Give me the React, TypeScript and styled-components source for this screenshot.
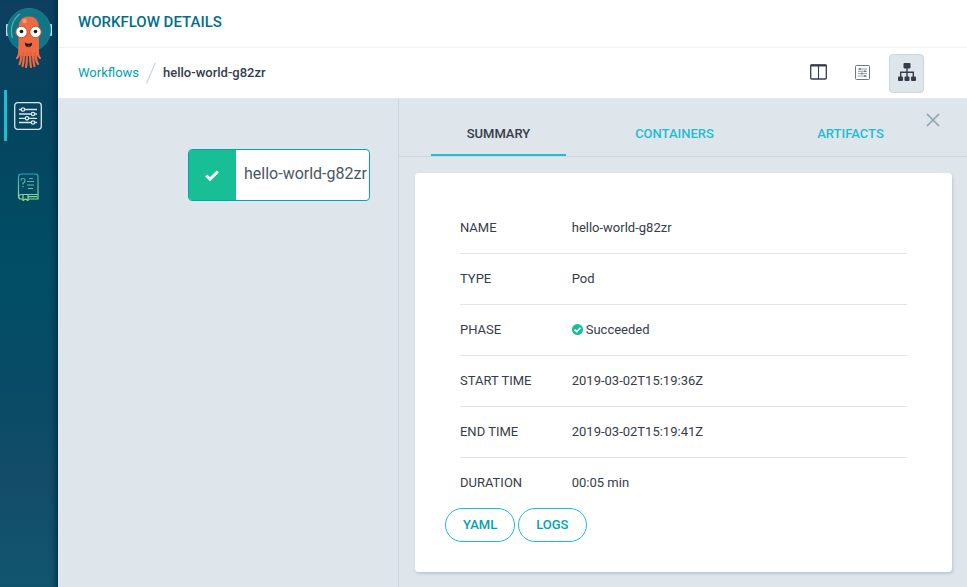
import React from "react";
import styled, { createGlobalStyle, css } from "styled-components";

const GlobalStyle = createGlobalStyle`
  * { box-sizing: border-box; }
  body {
    margin: 0;
    font-family: Roboto, "Liberation Sans", sans-serif;
    font-size: 13px;
    line-height: 20px;
    color: #363c4a;
    background: #dee6eb;
  }
  button { font: inherit; cursor: pointer; }
  svg { display: block; }
`;

const Layout = styled.div`
  display: flex;
  min-height: 100vh;
`;

const Sidebar = styled.nav`
  flex: none;
  width: 58px;
  display: flex;
  flex-direction: column;
  align-items: stretch;
  padding-top: 7px;
  background: linear-gradient(to bottom, #0d3f60 0%, #04465f 25%, #004e66 45%, #0a4b66 68%, #134c69 82%, #11566f 100%);
  box-shadow: inset -6px 0 6px -4px #032c40;
`;

const Logo = styled.a`
  display: flex;
  justify-content: center;
  height: 62px;
  margin-bottom: 21px;
`;

const NavLink = styled.a<{ $active?: boolean }>`
  display: flex;
  align-items: center;
  justify-content: center;
  height: 51px;
  margin: 0 4px 20px;
  padding-right: 5px;
  border-left: 3px solid ${(p) => (p.$active ? "#1fbdd0" : "transparent")};
`;

const Main = styled.main`
  flex: 1;
  min-width: 0;
  display: flex;
  flex-direction: column;
`;

const TitleBar = styled.header`
  height: 48px;
  padding: 0 20px 4px;
  display: flex;
  align-items: center;
  background: #fff;
  border-bottom: 1px solid #eff1f3;
`;

const Title = styled.h1`
  margin: 0;
  font-size: 15px;
  font-weight: 500;
  color: #006f8a;
`;

const ToolBar = styled.div`
  height: 51px;
  padding: 0 43px 0 20px;
  display: flex;
  align-items: center;
  justify-content: space-between;
  background: #fff;
  border-bottom: 1px solid #e3e8ec;
`;

const Breadcrumbs = styled.div`
  display: flex;
  align-items: center;
  gap: 7px;
  a { color: #00a2b3; text-decoration: none; }
  strong { font-weight: 500; }
`;

const Tools = styled.div`
  display: flex;
  gap: 9px;
`;

const ToolButton = styled.button<{ $active?: boolean }>`
  display: flex;
  align-items: center;
  justify-content: center;
  width: 35px;
  height: 39px;
  padding: 0 0 2px;
  border: 1px solid ${(p) => (p.$active ? "#ccd6dd" : "transparent")};
  border-radius: 4px;
  background: ${(p) => (p.$active ? "#dee6eb" : "transparent")};
`;

const Body = styled.div`
  flex: 1;
  display: flex;
`;

const Graph = styled.section`
  flex: 1;
  min-width: 0;
  padding: 50px 28px 0 130px;
`;

const Node = styled.div`
  display: flex;
  height: 52px;
  border: 1px solid #00a2b3;
  border-radius: 4px;
  background: #fff;
  overflow: hidden;
  white-space: nowrap;
`;

const NodeStatus = styled.div`
  flex: none;
  width: 47px;
  display: flex;
  align-items: center;
  justify-content: center;
  background: #18be94;
`;

const NodeName = styled.div`
  padding-left: 8px;
  font-size: 16px;
  line-height: 48px;
  color: #495763;
`;

const Panel = styled.aside`
  flex: none;
  width: 62.6%;
  border-left: 1px solid #ccd6dd;
`;

const TabBar = styled.div`
  position: relative;
  display: flex;
  gap: 41px;
  height: 58px;
  padding: 0 49px 0 32px;
  border-bottom: 1px solid #ccd6dd;
`;

const Tab = styled.button<{ $active?: boolean }>`
  flex: 1 1 0;
  min-width: 0;
  padding: 14px 0 0;
  border: 0;
  border-bottom: 2px solid transparent;
  background: none;
  font-weight: 500;
  color: #1fbdd0;
  ${(p) => p.$active && css`
    color: #363c4a;
    border-bottom-color: #1fbdd0;
  `}
`;

const CloseButton = styled.button`
  position: absolute;
  top: 14px;
  right: 27px;
  padding: 0;
  border: 0;
  background: none;
`;

const Card = styled.div`
  margin: 16px 15px 15px 16px;
  padding: 30px;
  border-radius: 4px;
  background: #fff;
  box-shadow: 1px 2px 3px rgba(90, 110, 125, 0.25);
`;

const Details = styled.dl`
  margin: 0 15px;
`;

const Row = styled.div`
  display: grid;
  grid-template-columns: 1fr 3fr;
  align-items: center;
  height: 51px;
  border-bottom: 1px solid #dee6eb;
  &:last-child { height: 50px; border-bottom: 0; }
  dd { margin: 0; display: flex; align-items: center; gap: 3px; }
`;

const Actions = styled.div`
  display: flex;
  gap: 3px;
`;

const PillButton = styled.button`
  height: 34px;
  padding: 0 17px;
  border: 1px solid #1fbdd0;
  border-radius: 17px;
  background: #fff;
  font-weight: 500;
  color: #00a2b3;
`;

const OctopusLogo = () => (
  <svg width="46" height="62" viewBox="0 0 46 62">
    <rect x="0" y="17" width="2.500" height="12" rx="1" fill="#c5e2ef" />
    <rect x="43.500" y="17" width="2.500" height="12" rx="1" fill="#c5e2ef" />
    <circle cx="23" cy="23" r="21.500" fill="#127586" stroke="#1b7f95" strokeWidth="1" />
    <path d="M6.500 31C3.500 21 7 12 14 7" fill="none" stroke="#55afb9" strokeWidth="1.200" />
    <g fill="none" stroke="#ee6b42" strokeWidth="2.200" strokeLinecap="round">
      <path d="M13.500 40c0 6 0 9-2.500 11M15.500 42c0 8 0 12-2 15M18 43c0 8 0 12-1.500 16M21 43c0 8 0 13-1 17" />
      <path d="M31.500 40c0 6 0 9 2.500 11M29.500 42c0 8 0 12 2.500 15M27 43c0 8 0 12 1.500 16M24 43c0 8 0 13 1 17" />
    </g>
    <path d="M12.500 22C12.500 14 16 9.500 22.800 9.500S33 14 33 22v22c0 3-2 5-4 5H17c-2 0-4.500-2-4.500-5z" fill="#ee6b42" />
    <path d="M17 45v6m4-6v8m4-8v8m4-8v6" stroke="#d2502f" strokeWidth="0.700" fill="none" />
    <circle cx="18.500" cy="14" r="2.200" fill="#f79a75" />
    <circle cx="15.500" cy="25" r="5.700" fill="#fff" stroke="#cf4c30" strokeWidth="1" />
    <circle cx="29.500" cy="25" r="5.700" fill="#fff" stroke="#cf4c30" strokeWidth="1" />
    <circle cx="15.500" cy="24.500" r="1.800" fill="#101820" />
    <circle cx="29.500" cy="24.500" r="1.800" fill="#101820" />
    <path d="M18.800 35.500q3.700 2.500 7.400 0-.3 4.800-3.700 4.800t-3.700-4.800z" fill="#17181c" />
    <path d="M21 39q1.500-1.200 3 0-1.500 1.600-3 0z" fill="#e43b32" />
  </svg>
);

const SlidersIcon = () => (
  <svg width="28" height="28" viewBox="0 0 28 28" fill="none" stroke="#d8e6ee" strokeWidth="1.300">
    <rect x="0.700" y="0.700" width="26.600" height="26.600" rx="3" />
    <path d="M5 7.500h2m4 0h12M5 12h12m4 0h2M5 16.300h6m4 0h8M5 20.500h12m4 0h2" />
    <circle cx="9" cy="7.500" r="1.700" />
    <circle cx="19" cy="12" r="1.700" />
    <circle cx="13" cy="16.300" r="1.700" />
    <circle cx="19" cy="20.500" r="1.700" />
  </svg>
);

const BookIcon = () => (
  <svg width="22" height="28" viewBox="0 0 22 28" fill="none" strokeWidth="1.200">
    <defs>
      <linearGradient id="book" gradientUnits="userSpaceOnUse" x1="0" y1="0" x2="0" y2="28">
        <stop offset="0" stopColor="#26a6bd" />
        <stop offset="1" stopColor="#9be28c" />
      </linearGradient>
    </defs>
    <g stroke="url(#book)">
      <path d="M4 26a2.500 2.500 0 0 1-2.500-3V3.500A2.500 2.500 0 0 1 4 1h14.500A2.500 2.500 0 0 1 21 3.500V21.500H4a2.200 2.200 0 0 0 0 4.500h2M11 26h10V21.500M11 23.700h9" />
      <path d="M6 21.500V27.500l2.500-1.500 2.500 1.500V21.500" />
      <path d="M4 7.500q0-2 2-2t2 2-2 2.500v1.500M6 13v1.300M12 5.500h4M10 8.500h7M10 12h7M11 15.500h5" />
    </g>
  </svg>
);

const Slash = () => (
  <svg width="10" height="22" viewBox="0 0 10 22" stroke="#ccd6dd" strokeWidth="1.200">
    <path d="M0.500 21.500L9.500 0.500" />
  </svg>
);

const ColumnsIcon = () => (
  <svg width="17" height="16" viewBox="0 0 17 16" fill="none" stroke="#363c4a">
    <rect x="0.700" y="1" width="15.600" height="14" rx="1" strokeWidth="1.300" />
    <path d="M0.500 1.500h16" strokeWidth="2" />
    <path d="M8.500 2v13" strokeWidth="1.100" />
  </svg>
);

const SmallSlidersIcon = () => (
  <svg width="15" height="15" viewBox="0 0 15 15" fill="none" stroke="#6c7684">
    <rect x="0.500" y="0.500" width="14" height="14" rx="1" />
    <path d="M3 4h9M3 6.300h9M3 8.600h9M3 11h9" strokeWidth="0.700" />
    <g fill="#6c7684" stroke="none">
      <circle cx="5" cy="4" r="1" />
      <circle cx="10" cy="6.300" r="1" />
      <circle cx="7" cy="8.600" r="1" />
      <circle cx="10" cy="11" r="1" />
    </g>
  </svg>
);

const SitemapIcon = () => (
  <svg width="18" height="18" viewBox="0 0 18 18" fill="#363c4a">
    <rect x="5.500" y="0" width="7" height="5.500" rx="1" />
    <path d="M8.300 5h1.400v3.500H16V14h-1.400V9.900H9.700V14H8.300V9.900H3.400V14H2V8.500h6.300z" />
    <rect x="0" y="13.500" width="5" height="4.500" rx="1" />
    <rect x="6.500" y="13.500" width="5" height="4.500" rx="1" />
    <rect x="13" y="13.500" width="5" height="4.500" rx="1" />
  </svg>
);

const CloseIcon = () => (
  <svg width="14" height="14" viewBox="0 0 14 14" stroke="#8fa4b1" strokeWidth="1.700">
    <path d="M1 1l12 12M13 1L1 13" />
  </svg>
);

const CheckIcon = () => (
  <svg width="16" height="11" viewBox="0 0 16 11" fill="none" stroke="#fff" strokeWidth="3">
    <path d="M1.200 5.500L5 9.200 12.800 1.500" />
  </svg>
);

const CheckCircleIcon = () => (
  <svg width="11" height="12" viewBox="0 0 11 12">
    <circle cx="5.500" cy="5.500" r="5.500" fill="#18be94" />
    <path d="M2.600 5.700l2.100 2L8.500 3.800" fill="none" stroke="#fff" strokeWidth="1.600" />
  </svg>
);

const details: { label: string; value: string; succeeded?: boolean }[] = [
  { label: "NAME", value: "hello-world-g82zr" },
  { label: "TYPE", value: "Pod" },
  { label: "PHASE", value: "Succeeded", succeeded: true },
  { label: "START TIME", value: "2019-03-02T15:19:36Z" },
  { label: "END TIME", value: "2019-03-02T15:19:41Z" },
  { label: "DURATION", value: "00:05 min" },
];

export default function App() {
  return (
    <>
      <GlobalStyle />
      <Layout>
        <Sidebar>
          <Logo href="#" aria-label="Argo"><OctopusLogo /></Logo>
          <NavLink href="#workflows" aria-label="Timeline" $active><SlidersIcon /></NavLink>
          <NavLink href="#help" aria-label="Help"><BookIcon /></NavLink>
        </Sidebar>
        <Main>
          <TitleBar><Title>WORKFLOW DETAILS</Title></TitleBar>
          <ToolBar>
            <Breadcrumbs>
              <a href="#workflows">Workflows</a>
              <Slash />
              <strong>hello-world-g82zr</strong>
            </Breadcrumbs>
            <Tools>
              <ToolButton aria-label="Summary"><ColumnsIcon /></ToolButton>
              <ToolButton aria-label="Timeline"><SmallSlidersIcon /></ToolButton>
              <ToolButton aria-label="Graph" $active><SitemapIcon /></ToolButton>
            </Tools>
          </ToolBar>
          <Body>
            <Graph>
              <Node>
                <NodeStatus><CheckIcon /></NodeStatus>
                <NodeName>hello-world-g82zr</NodeName>
              </Node>
            </Graph>
            <Panel>
              <TabBar role="tablist">
                <Tab role="tab" aria-selected $active>SUMMARY</Tab>
                <Tab role="tab">CONTAINERS</Tab>
                <Tab role="tab">ARTIFACTS</Tab>
                <CloseButton aria-label="Close"><CloseIcon /></CloseButton>
              </TabBar>
              <Card>
                <Details>
                  {details.map((d) => (
                    <Row key={d.label}>
                      <dt>{d.label}</dt>
                      <dd>{d.succeeded && <CheckCircleIcon />}{d.value}</dd>
                    </Row>
                  ))}
                </Details>
                <Actions>
                  <PillButton>YAML</PillButton>
                  <PillButton>LOGS</PillButton>
                </Actions>
              </Card>
            </Panel>
          </Body>
        </Main>
      </Layout>
    </>
  );
}
